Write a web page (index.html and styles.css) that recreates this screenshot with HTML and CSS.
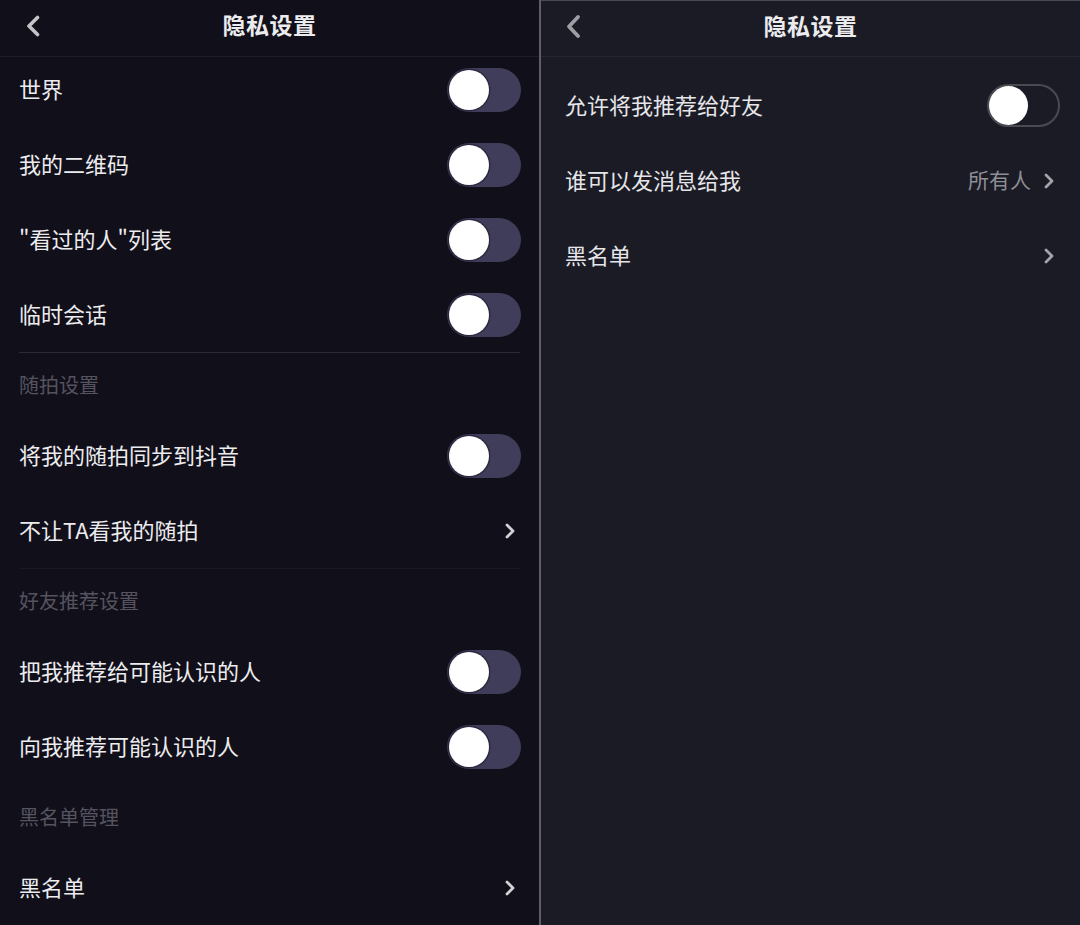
FILE: index.html
```html
<!DOCTYPE html>
<html lang="zh-CN">
<head>
<meta charset="utf-8">
<title>隐私设置</title>
<link rel="stylesheet" href="styles.css">
</head>
<body>
<div class="screens">
  <section class="panel panel-left">
    <header class="nav">
      <div class="nav-back">
        <svg width="14" height="22" viewBox="0 0 14 22"><path d="M11.5 2.5 L3 11 L11.5 19.5" fill="none" stroke="#c4c4c8" stroke-width="3.6" stroke-linecap="round" stroke-linejoin="round"/></svg>
      </div>
      <h1 class="nav-title">隐私设置</h1>
      <div></div>
    </header>
    <div class="list">
      <div class="row"><span class="label">世界</span><span class="switch"><span class="knob"></span></span></div>
      <div class="row"><span class="label">我的二维码</span><span class="switch"><span class="knob"></span></span></div>
      <div class="row"><span class="label">"看过的人"列表</span><span class="switch"><span class="knob"></span></span></div>
      <div class="row"><span class="label">临时会话</span><span class="switch"><span class="knob"></span></span></div>
      <div class="section section-line">随拍设置</div>
      <div class="row"><span class="label">将我的随拍同步到抖音</span><span class="switch"><span class="knob"></span></span></div>
      <div class="row"><span class="label">不让TA看我的随拍</span><svg class="chev" width="12" height="18" viewBox="0 0 12 18"><path d="M3 3 L9 9 L3 15" fill="none" stroke="#d2d2d6" stroke-width="2.8" stroke-linecap="round" stroke-linejoin="round"/></svg></div>
      <div class="section section-line faint">好友推荐设置</div>
      <div class="row"><span class="label">把我推荐给可能认识的人</span><span class="switch"><span class="knob"></span></span></div>
      <div class="row"><span class="label">向我推荐可能认识的人</span><span class="switch"><span class="knob"></span></span></div>
      <div class="section">黑名单管理</div>
      <div class="row"><span class="label">黑名单</span><svg class="chev" width="12" height="18" viewBox="0 0 12 18"><path d="M3 3 L9 9 L3 15" fill="none" stroke="#d2d2d6" stroke-width="2.8" stroke-linecap="round" stroke-linejoin="round"/></svg></div>
    </div>
  </section>
  <div class="split"></div>
  <section class="panel panel-right">
    <header class="nav nav-right">
      <div class="nav-back back-right">
        <svg width="16" height="25" viewBox="0 0 16 25"><path d="M13 3 L4 12.5 L13 22" fill="none" stroke="#9d9da3" stroke-width="3.8" stroke-linecap="round" stroke-linejoin="round"/></svg>
      </div>
      <h1 class="nav-title">隐私设置</h1>
      <div></div>
    </header>
    <div class="list list-right">
      <div class="row row-right"><span class="label">允许将我推荐给好友</span><span class="ios-switch"><span class="ios-knob"></span></span></div>
      <div class="row row-right"><span class="label">谁可以发消息给我</span><span class="trail"><span class="value">所有人</span><svg class="chev" width="12" height="18" viewBox="0 0 12 18"><path d="M3 3 L9 9 L3 15" fill="none" stroke="#a3a3a9" stroke-width="2.8" stroke-linecap="round" stroke-linejoin="round"/></svg></span></div>
      <div class="row row-right"><span class="label">黑名单</span><svg class="chev" width="12" height="18" viewBox="0 0 12 18"><path d="M3 3 L9 9 L3 15" fill="none" stroke="#a3a3a9" stroke-width="2.8" stroke-linecap="round" stroke-linejoin="round"/></svg></div>
    </div>
  </section>
</div>
</body>
</html>
```

FILE: styles.css
```css
* { box-sizing: border-box; }

html, body {
  margin: 0;
  padding: 0;
  background: #110f1a;
}

body {
  width: 1080px;
  height: 925px;
  overflow: hidden;
  font-family: "Noto Sans CJK SC", "Noto Sans", sans-serif;
  color: #ececef;
}

.screens {
  display: flex;
  height: 925px;
}

.panel {
  display: flex;
  flex-direction: column;
}

.panel-left {
  width: 539px;
  background: #110f1a;
}

.split {
  width: 2px;
  background: #5e5d69;
}

.panel-right {
  width: 539px;
  background: #1b1b25;
  border-top: 1px solid #4a4a55;
}

.nav {
  height: 57px;
  display: grid;
  grid-template-columns: 1fr auto 1fr;
  align-items: center;
  padding-bottom: 5px;
  border-bottom: 1px solid #1f1e29;
}

.nav-right {
  height: 56px;
  border-bottom: 1px solid #262630;
}

.nav-back {
  display: flex;
  align-items: center;
  padding-left: 26px;
}

.back-right {
  padding-left: 24px;
}

.nav-title {
  margin: 0 0 3px 0;
  font-size: 23px;
  font-weight: 700;
  color: #ececef;
  letter-spacing: 0.5px;
}

.list {
  display: flex;
  flex-direction: column;
  margin-top: -5px;
}

.row {
  height: 75px;
  display: flex;
  align-items: center;
  justify-content: space-between;
  padding: 0 18px 0 19px;
  font-size: 22px;
}

.label {
  color: #ececef;
  margin-bottom: 4px;
}

.row .chev {
  margin-right: 5px;
}

.section {
  height: 66px;
  display: flex;
  align-items: center;
  margin: 0 19px 0 19px;
  padding-bottom: 2px;
  font-size: 20px;
  color: #55535f;
}

.section-line {
  border-top: 1px solid #2a2935;
}

.section-line.faint {
  border-top-color: #191824;
}

.switch {
  width: 74px;
  height: 44px;
  border-radius: 22px;
  background: #403d5a;
  display: flex;
  align-items: center;
  padding-left: 2px;
}

.knob {
  width: 40px;
  height: 40px;
  border-radius: 50%;
  background: #ffffff;
  box-shadow: 0 0 0 1.5px rgba(30, 28, 45, 0.6);
}

/* right panel */
.list-right {
  margin-top: 11px;
}

.row-right {
  padding: 0 20px 0 24px;
}

.row-right .label {
  color: #e6e6ea;
}

.ios-switch {
  width: 73px;
  height: 43px;
  border-radius: 22px;
  border: 2px solid #4a4a53;
  background: #1b1b25;
  display: flex;
  align-items: center;
}

.ios-knob {
  width: 39px;
  height: 39px;
  border-radius: 50%;
  background: #ffffff;
}

.trail {
  display: flex;
  align-items: center;
}

.value {
  font-size: 21px;
  color: #8e8e95;
  margin-right: 12px;
  margin-bottom: 3px;
}

.row-right .chev {
  margin-right: 5px;
}
```
